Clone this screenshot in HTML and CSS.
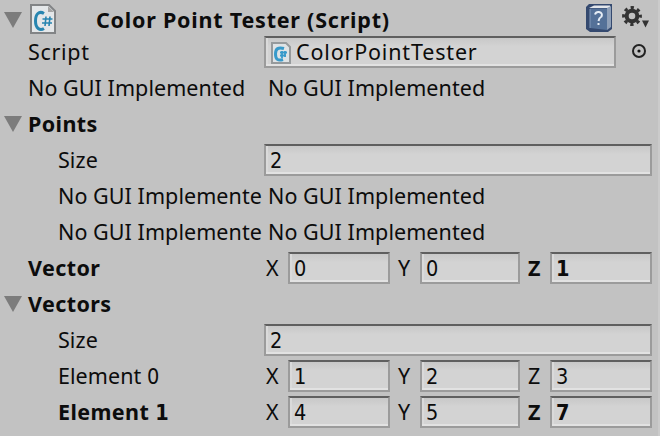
FILE: index.html
```html
<!DOCTYPE html>
<html lang="en">
<head>
<meta charset="utf-8">
<title>Inspector</title>
<link rel="stylesheet" href="styles.css">
</head>
<body>
<main class="inspector">
  <header class="row header">
    <svg class="fold" viewBox="0 0 18 16"><path d="M0 0H18L9 16Z"/></svg>
    <svg class="script-icon" viewBox="0 0 26 30"><path d="M1 1H19L25 7V29H1Z" fill="#e4e7e9" stroke="#828486" stroke-width="2"/><path d="M18 2V8H24Z" fill="#a5a5a5"/><path d="M14 9.500C9 6.500 5.500 10 5.500 17C5.500 24.500 10 27 14 24.500" fill="none" stroke="#2785b0" stroke-width="3"/><path d="M16 12.500L15 22M20 12.500L19 22M12.500 15H22.500M12 19H22" fill="none" stroke="#2785b0" stroke-width="1.600"/></svg>
    <span class="title bold">Color Point Tester (Script)</span>
    <svg class="book" viewBox="0 0 26 28"><path d="M0 3L3 0H26V25L22 28H4L0 25Z" fill="#34496f"/><path d="M3 4L8 1.500H24V4Z" fill="#e2e6eb"/><path d="M21 4L25 2V23L21 26Z" fill="#8fa0b8"/><path d="M4 4.500H21V26L4 24Z" fill="#547198"/><path d="M4 5V24" stroke="#8199b9"/><path d="M9 10.500Q10 7.500 13 8Q17 9 15.500 12.500Q13 14 12.500 17M12.500 19V21" fill="none" stroke="#e6edf5" stroke-width="2"/></svg>
    <svg class="gear" viewBox="0 0 28 24"><circle cx="10" cy="10" r="5.300" fill="none" stroke="#333" stroke-width="4"/><circle cx="10" cy="10" r="8.400" fill="none" stroke="#333" stroke-width="3" stroke-dasharray="3.300 3.297" stroke-dashoffset="1.650"/><path d="M20 14.500H27L23.500 21.500Z" fill="#333"/></svg>
  </header>
  <div class="row"><span class="label script">Script</span>
    <div class="field object"><svg class="mini" viewBox="0 0 20 22"><path d="M1 1H15L19 5V21H1Z" fill="#dfe3e5" stroke="#969a9c" stroke-width="2"/><path d="M13 6.500Q4.500 4 4.500 12Q4.500 20 12 17.500" fill="none" stroke="#389aca" stroke-width="3"/><path d="M9 10.500H16M9 13.500H15M11 9V16M14 9V15" stroke="#389aca" stroke-width="1.800"/></svg><span>ColorPointTester</span></div>
    <svg class="picker" viewBox="0 0 16 16"><circle cx="8" cy="8" r="6" fill="none" stroke="#222" stroke-width="2"/><circle cx="8" cy="8" r="1.600" fill="#111"/></svg>
  </div>
  <div class="row"><span class="label">No GUI Implemented</span><span class="message">No GUI Implemented</span></div>
  <div class="row"><svg class="fold" viewBox="0 0 18 16"><path d="M0 0H18L9 16Z"/></svg><span class="group bold">Points</span></div>
  <div class="row"><span class="label child">Size</span><div class="field">2</div></div>
  <div class="row"><span class="label child">No GUI Implemente</span><span class="message">No GUI Implemented</span></div>
  <div class="row"><span class="label child">No GUI Implemente</span><span class="message">No GUI Implemented</span></div>
  <div class="row"><span class="label bold">Vector</span><div class="vector"><span>X</span><div class="field">0</div><span>Y</span><div class="field">0</div><span class="bold">Z</span><div class="field bold">1</div></div></div>
  <div class="row"><svg class="fold" viewBox="0 0 18 16"><path d="M0 0H18L9 16Z"/></svg><span class="group bold">Vectors</span></div>
  <div class="row"><span class="label child">Size</span><div class="field">2</div></div>
  <div class="row"><span class="label child">Element <span class="digit">0</span></span><div class="vector"><span>X</span><div class="field">1</div><span>Y</span><div class="field">2</div><span>Z</span><div class="field">3</div></div></div>
  <div class="row"><span class="label child bold">Element <span class="digit">1</span></span><div class="vector"><span>X</span><div class="field">4</div><span>Y</span><div class="field">5</div><span class="bold">Z</span><div class="field bold">7</div></div></div>
</main>
</body>
</html>
```
FILE: styles.css
```css
* { box-sizing: border-box; }
body { margin: 0; background: #c2c2c2; }
.inspector {
  width: 660px;
  height: 436px;
  overflow: hidden;
  border-right: 2px solid #cbcbcb;
  color: #0c0c0c;
  font: 21.5px/32px "Noto Sans", sans-serif;
  letter-spacing: 0.06px;
  white-space: nowrap;
}
.row { display: flex; height: 36px; padding-right: 6px; }
.bold { font-weight: 700; letter-spacing: 0.4px; }
.label { width: 264px; padding-left: 28px; flex: none; }
.script { letter-spacing: 0.7px; }
.child { padding-left: 58px; }
.message { padding-left: 4px; }
.group { padding-left: 6px; }
.fold { width: 18px; height: 16px; margin: 8px 0 0 4px; fill: #7c7c7c; flex: none; }
.header { line-height: 40px; }
.header .fold { margin-top: 12px; }
.script-icon { width: 26px; height: 30px; margin: 4px 0 0 8px; }
.title { margin-left: 40px; letter-spacing: 0.78px; }
.book { width: 26px; height: 28px; margin: 4px 10px 0 auto; }
.gear { width: 28px; height: 24px; margin: 6px 2px 0 0; }
.field {
  flex: 1;
  min-width: 0;
  height: 32px;
  padding-left: 4px;
  border: 2px solid #9b9b9b;
  border-top-color: #5f5f5f;
  background: linear-gradient(#c8c8c8, #d3d3d3 30%, #d3d3d3);
  box-shadow: inset 0 -2px #e2e2e2, inset 2px 0 #dadada;
  font-family: "DejaVu Sans Condensed", "DejaVu Sans", sans-serif;
  font-size: 21.5px;
  line-height: 29px;
}
.digit { font-family: "DejaVu Sans Condensed", "DejaVu Sans", sans-serif; }
.object {
  display: flex;
  flex: none;
  width: 352px;
  padding-left: 5px;
  font-family: "Noto Sans", sans-serif;
  letter-spacing: 0.83px;
  line-height: 28px;
}
.mini { width: 20px; height: 22px; margin: 4px 5px 0 0; }
.picker { width: 16px; height: 16px; margin: 7px 0 0 15px; }
.vector { display: grid; flex: 1; grid-template-columns: 22px 102px 30px 100px 30px 102px; padding-left: 2px; }
.vector > .field + span { padding-left: 8px; }
```
